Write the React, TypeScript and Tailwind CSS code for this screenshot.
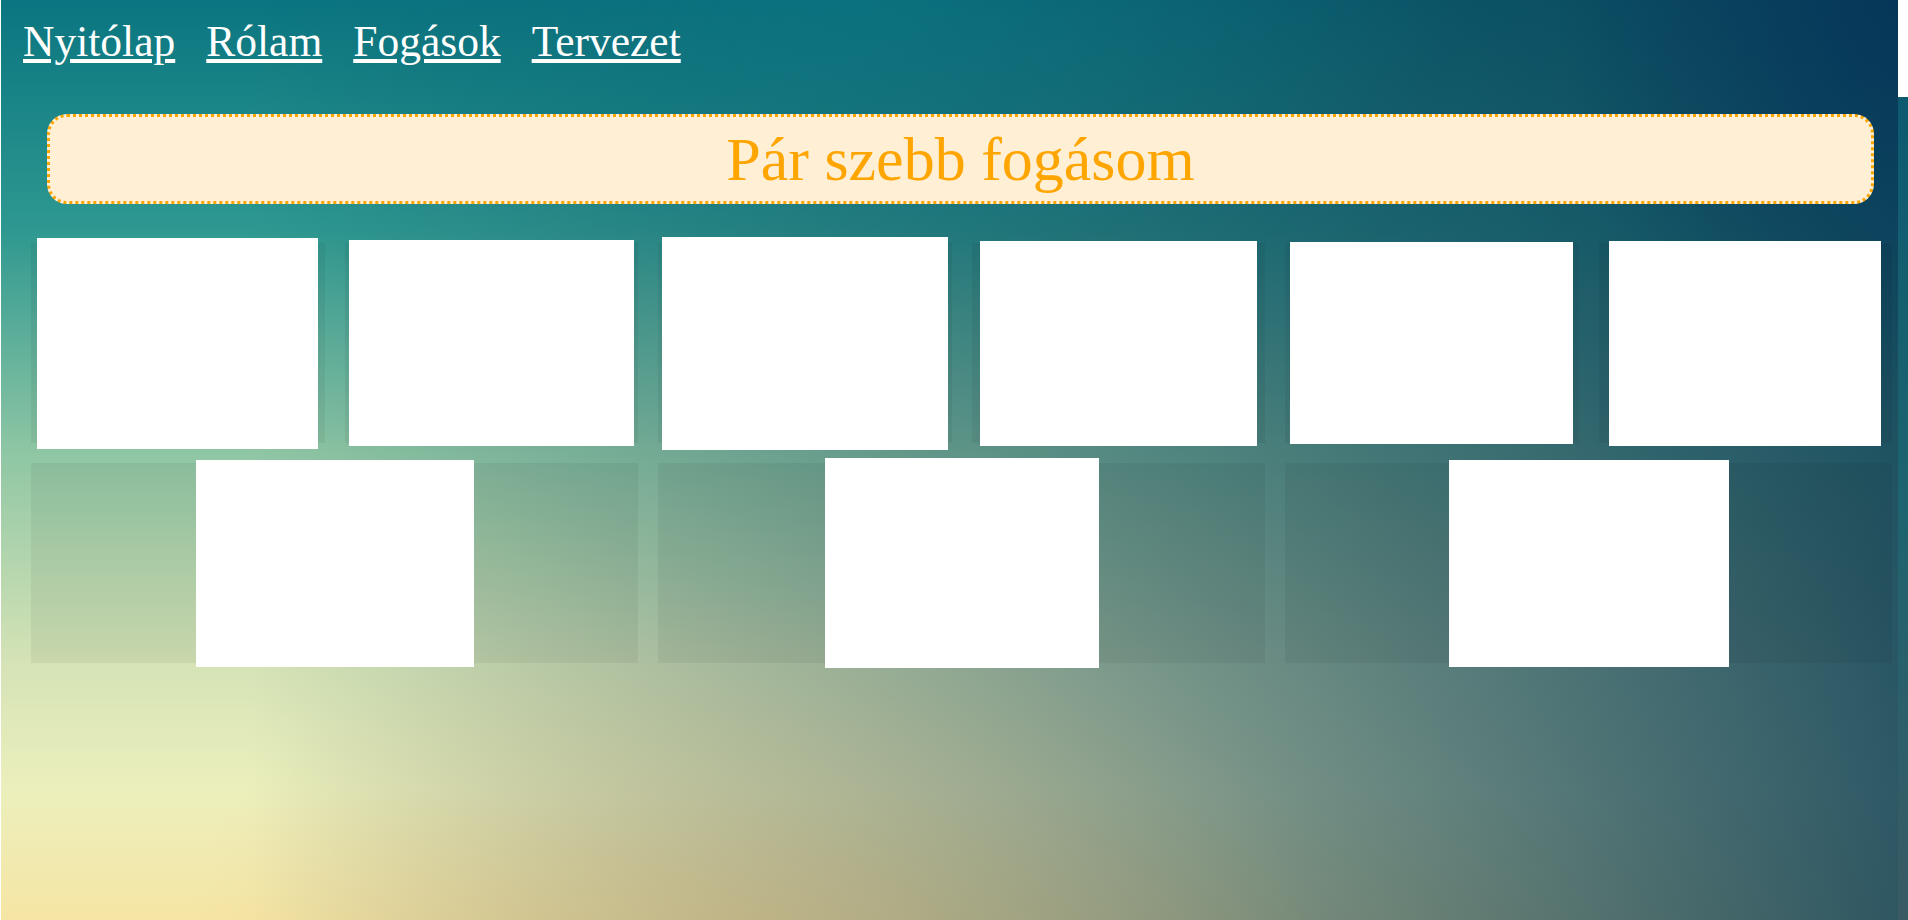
import React from "react";

const navLinks = ["Nyitólap", "Rólam", "Fogások", "Tervezet"];

const topRow = [
  "w-[281px] h-[211px]",
  "w-[285px] h-[206px]",
  "w-[286px] h-[213px]",
  "w-[277px] h-[205px]",
  "w-[283px] h-[202px]",
  "w-[272px] h-[205px]",
];

const bottomRow = ["w-[278px] h-[207px]", "w-[274px] h-[210px]", "w-[280px] h-[207px]"];

const Dish: React.FC<{ size: string }> = ({ size }) => (
  <figure className="flex h-[200px] items-center justify-center bg-black/5">
    <div className={`${size} shrink-0 bg-white`} />
  </figure>
);

export default function App() {
  return (
    <div className="flex min-h-screen bg-white pl-px font-['Liberation_Serif',serif]">
      <main className="flex-1 bg-[image:radial-gradient(ellipse_32%_28%_at_45%_0%,rgba(12,124,134,0.55),rgba(12,124,134,0)),radial-gradient(ellipse_30%_35%_at_40%_100%,rgba(200,168,118,0.35),rgba(200,168,118,0)),radial-gradient(ellipse_18%_45%_at_100%_0%,rgba(3,48,88,0.7),rgba(3,48,88,0)),linear-gradient(to_right,rgba(12,62,86,0)_13%,rgba(12,62,86,0.85)_100%),linear-gradient(to_bottom,#0a7580_0%,#2e9890_25%,#8ec6a4_49%,#d5e3b6_72%,#ecefbc_86%,#f6e5a4_100%)]">
        {/* Nav */}
        <nav className="flex h-[97px] gap-[31px] pl-[22px] pt-[16px] text-[43.5px] leading-[normal] text-white">
          {navLinks.map((link) => (
            <a key={link} href="#" className="underline">
              {link}
            </a>
          ))}
        </nav>

        {/* Title */}
        <h1 className="ml-[46px] mr-[24px] mt-[17px] flex h-[90px] items-center justify-center rounded-[20px] border-[3px] border-dotted border-[#ffa500] bg-[#ffefd5] text-[62px] font-normal leading-[normal] text-[#ffa500]">
          Pár szebb fogásom
        </h1>

        {/* Dishes */}
        <section className="mt-[39px] flex flex-col gap-5 pl-[30px] pr-[6px]">
          <div className="grid grid-cols-6 gap-5">
            {topRow.map((size, i) => (
              <Dish key={i} size={size} />
            ))}
          </div>
          <div className="grid grid-cols-3 gap-5">
            {bottomRow.map((size, i) => (
              <Dish key={i} size={size} />
            ))}
          </div>
        </section>
      </main>
      <div className="flex w-[10px] flex-col">
        <div className="h-[97px] bg-white" />
        <div className="flex-1 bg-[linear-gradient(to_bottom,#0d5a70,#1e6470_50%,#3a5a64)]" />
      </div>
    </div>
  );
}
